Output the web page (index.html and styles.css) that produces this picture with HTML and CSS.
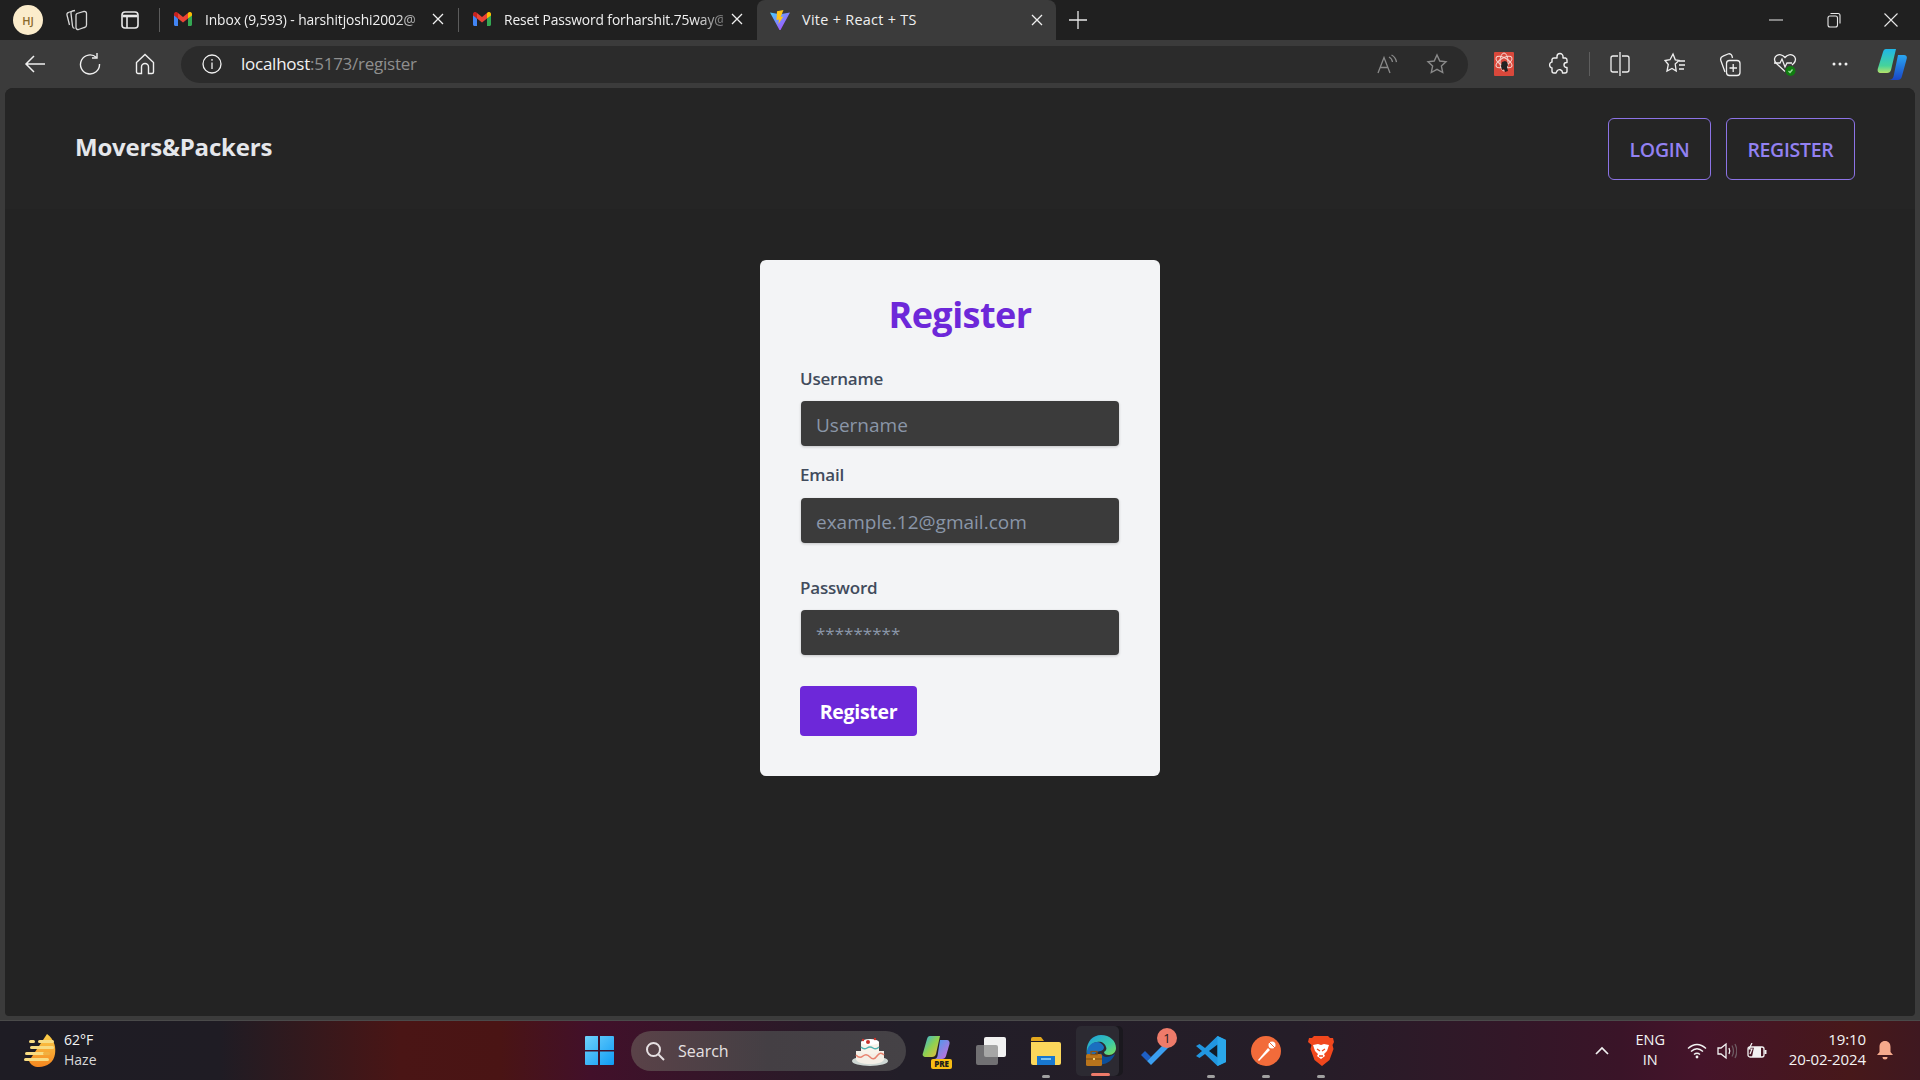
FILE: index.html
```html
<!DOCTYPE html>
<html lang="en">
<head>
<meta charset="utf-8">
<title>Vite + React + TS</title>
<link rel="stylesheet" href="styles.css">
</head>
<body>
<div class="screen">
  <header class="tabbar">
    <div class="avatar">HJ</div>
    <div class="tb-icon tb-work">
      <svg width="24" height="24" viewBox="0 0 24 24" fill="none" stroke="#d8d8d8" stroke-width="1.300"><path d="M6 3.500 3.500 4.500A2 2 0 0 0 2 7l2.500 10"/><path d="M10 2.500 7.500 3A2 2 0 0 0 6 5.500L7.500 18a3 3 0 0 0 2 2.500"/><path d="M12 5.500l7-2a2 2 0 0 1 2.500 2V17a2.500 2.500 0 0 1-2 2.500l-6 2a2 2 0 0 1-2.500-2V8a2.500 2.500 0 0 1 1-2.500z"/></svg>
    </div>
    <div class="tb-icon tb-vert">
      <svg width="20" height="20" viewBox="0 0 20 20" fill="none" stroke="#e8e8e8" stroke-width="1.600"><rect x="2" y="2" width="16" height="16" rx="3"/><path d="M2.500 6h15" stroke-width="2.600"/><path d="M7 6v12"/></svg>
    </div>
    <span class="tab-sep"></span>
    <div class="tab">
      <svg class="fav" width="18" height="14" viewBox="0 0 18 14"><path d="M0 2v10.500c0 .8.600 1.500 1.500 1.500H4V6.500z" fill="#4285f4"/><path d="M14 14h2.500c.9 0 1.500-.7 1.500-1.500V2l-4 4.500z" fill="#34a853"/><path d="M14 1v5.500L18 3.500V2c0-1.800-2.200-2.700-3.500-1.500z" fill="#fbbc04"/><path d="M4 6.500V1l5 4 5-4v5.500L9 10.500z" fill="#ea4335"/><path d="M0 2v1.500l4 3V1L3.500.5C2.200-.7 0 .2 0 2z" fill="#c5221f"/></svg>
      <span class="tab-title">Inbox (9,593) - harshitjoshi2002@</span>
      <svg class="tab-x" width="12" height="12" viewBox="0 0 12 12" stroke="#f0f0f0" stroke-width="1.300"><path d="M1 1l10 10M11 1 1 11"/></svg>
    </div>
    <span class="tab-sep"></span>
    <div class="tab">
      <svg class="fav" width="18" height="14" viewBox="0 0 18 14"><path d="M0 2v10.500c0 .8.600 1.500 1.500 1.500H4V6.500z" fill="#4285f4"/><path d="M14 14h2.500c.9 0 1.500-.7 1.500-1.500V2l-4 4.500z" fill="#34a853"/><path d="M14 1v5.500L18 3.500V2c0-1.800-2.200-2.700-3.500-1.500z" fill="#fbbc04"/><path d="M4 6.500V1l5 4 5-4v5.500L9 10.500z" fill="#ea4335"/><path d="M0 2v1.500l4 3V1L3.500.5C2.200-.7 0 .2 0 2z" fill="#c5221f"/></svg>
      <span class="tab-title">Reset Password forharshit.75way@</span>
      <svg class="tab-x" width="12" height="12" viewBox="0 0 12 12" stroke="#f0f0f0" stroke-width="1.300"><path d="M1 1l10 10M11 1 1 11"/></svg>
    </div>
    <div class="tab tab-active">
      <svg class="fav" width="20" height="20" viewBox="0 0 20 20"><defs><linearGradient id="vt" x1="0" y1="0" x2="1" y2="1"><stop offset="0" stop-color="#41d1ff"/><stop offset="1" stop-color="#bd34fe"/></linearGradient></defs><path d="M0 2.500 10 4.200 20 2.500 10.500 20h-1z" fill="url(#vt)"/><path d="M13.500 0 7 1.300 6.500 10l2.500-.5-.6 4.500 5-7.500-2.700.5z" fill="#ffc517"/></svg>
      <span class="tab-title tab-title-full">Vite + React + TS</span>
      <svg class="tab-x" width="12" height="12" viewBox="0 0 12 12" stroke="#f0f0f0" stroke-width="1.300"><path d="M1 1l10 10M11 1 1 11"/></svg>
    </div>
    <div class="tb-icon tb-plus">
      <svg width="18" height="18" viewBox="0 0 18 18" stroke="#e8e8e8" stroke-width="1.300"><path d="M9 0v18M0 9h18"/></svg>
    </div>
    <div class="win-controls">
      <span class="win-btn"><svg width="14" height="2" viewBox="0 0 14 2" stroke="#e8e8e8"><path d="M0 1h14"/></svg></span>
      <span class="win-btn"><svg width="14" height="16" viewBox="0 0 14 16" fill="none" stroke="#e8e8e8" stroke-width="1.100"><rect x="1" y="4" width="9.500" height="11" rx="2"/><path d="M3.500 1.500h7.500a2 2 0 0 1 2 2v8"/></svg></span>
      <span class="win-btn"><svg width="14" height="14" viewBox="0 0 14 14" stroke="#e8e8e8" stroke-width="1.100"><path d="M.5.500l13 13M13.500.500l-13 13"/></svg></span>
    </div>
  </header>

  <div class="toolbar">
    <span class="tool"><svg width="22" height="20" viewBox="0 0 22 20" fill="none" stroke="#f0f0f0" stroke-width="1.500"><path d="M21 10H2M10 2l-8 8 8 8"/></svg></span>
    <span class="tool"><svg width="22" height="22" viewBox="0 0 22 22" fill="none" stroke="#f0f0f0" stroke-width="1.400"><path d="M17.500 4.500A9.500 9.500 0 1 0 20.500 11"/><path d="M18 0v5h-5"/></svg></span>
    <span class="tool"><svg width="20" height="22" viewBox="0 0 20 22" fill="none" stroke="#f0f0f0" stroke-width="1.400"><path d="M1.500 9.500 10 1.500l8.500 8V19a1.500 1.500 0 0 1-1.500 1.500h-3.500V14a3.500 3.500 0 0 0-7 0v6.500H3A1.500 1.500 0 0 1 1.500 19z"/></svg></span>
    <div class="address">
      <svg class="addr-info" width="20" height="20" viewBox="0 0 20 20" fill="none" stroke="#f0f0f0" stroke-width="1.300"><circle cx="10" cy="10" r="9"/><path d="M10 8.500V15M10 5v1.800"/></svg>
      <span class="url"><span class="url-host">localhost</span>:5173/register</span>
      <svg class="addr-read" width="20" height="20" viewBox="0 0 20 20" fill="none" stroke="#8a8a8a" stroke-width="1.300"><path d="M1 19 7 3.500 13 19M3.500 13.500h7"/><path d="M12 3q3 1.500 3.500 5M14.500 1q4 2 5 7"/></svg>
      <svg class="addr-star" width="22" height="22" viewBox="0 0 22 22" fill="none" stroke="#8a8a8a" stroke-width="1.400"><path d="M11 2l2.800 6 6.200.8-4.600 4.300 1.300 6.400L11 16.300l-5.700 3.200 1.300-6.400L2 8.800 8.200 8z"/></svg>
    </div>
    <div class="tool-group">
      <span class="tool"><svg width="20" height="24" viewBox="0 0 20 24"><rect width="20" height="24" rx="1" fill="#d9483b"/><g fill="none" stroke="#f6d7d2" stroke-width="1"><ellipse cx="10" cy="10" rx="9" ry="4" transform="rotate(30 10 10)"/><ellipse cx="10" cy="10" rx="9" ry="4" transform="rotate(-30 10 10)"/><ellipse cx="10" cy="10" rx="4" ry="9"/></g><path d="M8 10l3-1 2 1 1 3-1 2 1 4-3 1-1-3-2 1-1-4z" fill="#222"/></svg></span>
      <span class="tool"><svg width="20" height="24" viewBox="0 0 20 24" fill="none" stroke="#f0f0f0" stroke-width="1.400" stroke-linejoin="round"><path d="M8 5V4.500a3 3 0 0 1 6 0V6h2.500A2 2 0 0 1 18 8v2.500h-.5a2.500 2.500 0 0 0 0 5h.5V19a2 2 0 0 1-2 2h-2.500v-.5a3 3 0 0 0-5.500-1.500L7 21H5a2 2 0 0 1-2-2v-3l-.5-.2a3 3 0 0 1 0-5.600L3 10V7.500A2 2 0 0 1 5 6h3z"/></svg></span>
      <span class="tool-sep"></span>
      <span class="tool"><svg width="20" height="24" viewBox="0 0 20 24" fill="none" stroke="#f0f0f0" stroke-width="1.300"><path d="M10 0v24"/><path d="M8 4H3a2 2 0 0 0-2 2v12a2 2 0 0 0 2 2h5M12 4h5a2 2 0 0 1 2 2v12a2 2 0 0 1-2 2h-5"/></svg></span>
      <span class="tool"><svg width="22" height="24" viewBox="0 0 22 24" fill="none" stroke="#f0f0f0" stroke-width="1.300"><path d="M9 2l2.300 5.800 3.700.6-3.800 3.600 1 7-4.200-2.600L3 19l1.300-6.500L1 8.500l5-.8z"/><path d="M15 9h6M15 13h6M15 17h5"/></svg></span>
      <span class="tool"><svg width="22" height="26" viewBox="0 0 22 26" fill="none" stroke="#f0f0f0" stroke-width="1.300"><path d="M6 21 2 10c-1-2.500 0-4 2-4.800L9 3c2-.7 3.500.3 4 2l.5 2"/><rect x="7.500" y="9.500" width="13.500" height="15" rx="3"/><path d="M14.200 13v8M10.500 17h7.500"/></svg></span>
      <span class="tool"><svg width="24" height="26" viewBox="0 0 24 26" fill="none" stroke="#f0f0f0" stroke-width="1.300"><path d="M12 20.500 3 12c-5-6 4-12 9-5.500C17 0 26 6 21 12l-2 2"/><path d="M1 12h6l2-4 3 8 2-4h5"/><circle cx="17.500" cy="20" r="5" fill="#107c10" stroke="none"/><path d="M15.500 20l1.500 1.500 2.500-3" stroke="#9be09b"/></svg></span>
      <span class="tool"><svg width="16" height="4" viewBox="0 0 16 4" fill="#f0f0f0"><circle cx="2" cy="2" r="1.500"/><circle cx="8" cy="2" r="1.500"/><circle cx="14" cy="2" r="1.500"/></svg></span>
      <span class="tool tool-copilot"><svg width="30" height="32" viewBox="0 0 30 32"><defs><linearGradient id="cpa" x1="0" y1="0" x2="0" y2="1"><stop offset="0" stop-color="#1fb6e8"/><stop offset=".7" stop-color="#46d39a"/><stop offset="1" stop-color="#b6e36a"/></linearGradient><linearGradient id="cpb" x1="0" y1="0" x2="0" y2="1"><stop offset="0" stop-color="#2aa6f0"/><stop offset="1" stop-color="#1a46c8"/></linearGradient></defs><path d="M9 1h10l-5 21c-.5 2-2 3-4 3H4c-3 0-4-2-3-5L6 4c.5-2 1.500-3 3-3z" fill="url(#cpa)"/><path d="M21 7h6c2.500 0 3.500 2 2.500 4.500L25 28c-.5 2.500-2 4-4.500 4H11c3 0 5-1 5.500-3.500z" fill="url(#cpb)"/></svg></span>
    </div>
  </div>

  <div class="viewport">
    <nav class="nav">
      <a class="brand">Movers&amp;Packers</a>
      <div class="nav-actions">
        <a class="nav-btn">LOGIN</a>
        <a class="nav-btn">REGISTER</a>
      </div>
    </nav>
    <main class="main">
      <form class="card">
        <h1 class="card-title">Register</h1>
        <label class="label label-user">Username</label>
        <input class="input" type="text" placeholder="Username">
        <label class="label label-email">Email</label>
        <input class="input" type="text" placeholder="example.12@gmail.com">
        <label class="label label-pass">Password</label>
        <input class="input input-pass" type="text" placeholder="*********">
        <button class="submit" type="button">Register</button>
      </form>
    </main>
  </div>

  <footer class="taskbar">
    <div class="weather">
      <svg width="32" height="34" viewBox="0 0 32 34"><defs><linearGradient id="sun" x1="0" y1="0" x2="0" y2="1"><stop offset="0" stop-color="#fbcf4a"/><stop offset="1" stop-color="#f5861f"/></linearGradient></defs><path d="M23 0c8 6 9 14 8 20-1 8-8 13-16 13-5 0-8-2-10-6z" fill="url(#sun)"/><g fill="#f8dc82"><rect x="5" y="6" width="6" height="3" rx="1.500"/><rect x="14" y="6" width="16" height="3" rx="1.500"/><rect x="6" y="12" width="24" height="3" rx="1.500"/><rect x="1" y="18" width="20" height="3" rx="1.500"/><rect x="19" y="18" width="7" height="3" rx="1.500" fill="#f0b040"/><rect x="0" y="24" width="25" height="3" rx="1.500"/></g></svg>
      <div class="weather-text"><span class="w-temp">62°F</span><span class="w-desc">Haze</span></div>
    </div>
    <div class="task-center">
      <span class="task task-start"><svg width="29" height="29" viewBox="0 0 29 29"><defs><linearGradient id="win" x1="0" y1="0" x2="1" y2="1"><stop offset="0" stop-color="#6fd1fb"/><stop offset="1" stop-color="#0f9cf5"/></linearGradient></defs><path d="M1 0h12v14H0V1a1 1 0 0 1 1-1zM15 0h13a1 1 0 0 1 1 1v13H15zM0 15.500h13V29H1a1 1 0 0 1-1-1zM15 15.500h14V28a1 1 0 0 1-1 1H15z" fill="url(#win)"/></svg></span>
      <div class="search">
        <svg width="20" height="20" viewBox="0 0 20 20" fill="none" stroke="#e6e0e2" stroke-width="2"><circle cx="8.500" cy="8.500" r="6.500"/><path d="M13.500 13.500 19 19"/></svg>
        <span class="search-text">Search</span>
        <svg class="cake" width="36" height="30" viewBox="0 0 36 30"><ellipse cx="18" cy="25" rx="18" ry="5" fill="#cfd8d4"/><path d="M4 15h28v8c0 3-6 5-14 5S4 26 4 23z" fill="#f4efe6"/><path d="M4 19q3.500 4 7 1t7 1 7-1 7-1" fill="none" stroke="#e8836f" stroke-width="1.500"/><path d="M9 6h18v9c0 2-4 3-9 3s-9-1-9-3z" fill="#f8f3ea"/><path d="M9 11q3 3 6 1t6 0 6-1" fill="none" stroke="#52b2b0" stroke-width="1.500"/><ellipse cx="18" cy="6" rx="9" ry="3" fill="#fff"/><circle cx="16" cy="6" r="2" fill="#c8342c"/><circle cx="23" cy="3" r="1.200" fill="#c8342c"/><circle cx="11" cy="4" r="1.200" fill="#c8342c"/></svg>
      </div>
      <span class="task task-copilot">
        <svg width="28" height="24" viewBox="0 0 28 24"><defs><linearGradient id="cp2" x1="0" y1="0" x2="1" y2="1"><stop offset="0" stop-color="#2fb0e8"/><stop offset=".5" stop-color="#8fd14f"/><stop offset="1" stop-color="#f6b73c"/></linearGradient><linearGradient id="cp3" x1="0" y1="0" x2="1" y2="1"><stop offset="0" stop-color="#3aa0f0"/><stop offset="1" stop-color="#d36ad8"/></linearGradient></defs><path d="M8 0h10l-4 18c-.5 2-2 3-4 3H4c-3 0-4-2-3-4L5 3c.5-2 1.500-3 3-3z" fill="url(#cp2)"/><path d="M18 4h7c2 0 3 2 2.500 4L24 20c-.5 2-2 3-4 3h-8c2 0 3-1 3.500-3z" fill="url(#cp3)"/></svg>
        <span class="pre-badge">PRE</span>
      </span>
      <span class="task task-view"><svg width="30" height="28" viewBox="0 0 30 28"><rect x="8" y="0" width="22" height="20" rx="2" fill="#f2f2f2"/><rect x="0" y="8" width="22" height="20" rx="2" fill="#8c8c8c" fill-opacity=".75"/></svg></span>
      <span class="task task-files has-dot"><svg width="30" height="28" viewBox="0 0 30 28"><path d="M0 2a2 2 0 0 1 2-2h8l3 4H0z" fill="#e3a81e"/><path d="M0 5h28a2 2 0 0 1 2 2v19a2 2 0 0 1-2 2H2a2 2 0 0 1-2-2z" fill="#fbd75b"/><rect x="6" y="19" width="18" height="9" fill="#1878d0"/><rect x="10" y="21" width="10" height="2" fill="#7fc4f2"/></svg></span>
      <span class="task task-edge">
        <svg width="30" height="32" viewBox="0 0 30 32"><defs><linearGradient id="eg" x1="0" y1="0" x2="1" y2="1"><stop offset="0" stop-color="#1b9de2"/><stop offset=".6" stop-color="#3bc9a7"/><stop offset="1" stop-color="#7fe05a"/></linearGradient></defs><path d="M15 0c9 0 15 6 15 13 0 4-3 7-7 7-3 0-5-1-5-3 2-1 3-3 2-5-1-4-5-6-9-5-6 1-10 7-10 13C-1 8 6 0 15 0z" fill="url(#eg)"/><path d="M1 18c0-7 5-11 10-11 3 0 6 2 7 5 0 2-1 3-3 4-5 0-8 4-7 10-4-1-7-4-7-8z" fill="#1b6fc0"/><path d="M15 18c2 5 7 5 14 1-3 7-9 11-15 10-3-3-2-9 1-11z" fill="#0c4f9a"/><rect x="0" y="19" width="16" height="12" rx="1.500" fill="#b8741c"/><rect x="5" y="16.500" width="6" height="3" fill="none" stroke="#8a5414" stroke-width="1.300"/><rect x="0" y="23.500" width="16" height="1" fill="#7a4a10"/><rect x="7" y="23" width="2" height="2" fill="#f3cf72"/></svg>
      </span>
      <span class="task task-todo">
        <svg width="28" height="22" viewBox="0 0 28 22"><path d="M0 12l4-4 6 6-4 4z" fill="#1e5fc4"/><path d="M6 18l4 4L28 4l-4-4z" fill="#3b9ff0"/></svg>
        <span class="badge">1</span>
      </span>
      <span class="task task-code has-dot"><svg width="30" height="30" viewBox="0 0 30 30"><path d="M21.500 0 30 4v22l-8.500 4L9 18l-5.500 4L0 20l6-5-6-5 3.500-2L9 12z" fill="#2196e0"/><path d="M21.500 8.500v13L13 15z" fill="#111c28"/><path d="M21.500 0 30 4v22l-8.500 4z" fill="#2aa7ea"/></svg></span>
      <span class="task task-postman has-dot"><svg width="30" height="30" viewBox="0 0 30 30"><circle cx="15" cy="15" r="15" fill="#f26b3a"/><path d="M7 24 17 12l2 2L8 25z" fill="#fff"/><circle cx="21" cy="9" r="3.500" fill="#fff"/><path d="M18 6l6 6" stroke="#f26b3a"/></svg></span>
      <span class="task task-brave has-dot"><svg width="26" height="30" viewBox="0 0 26 30"><path d="M6 0h14l2 2 3 0 1 4-1.500 3 1 4-4 11-7.500 6-7.500-6-4-11 1-4L0 6l1-4 3 0z" fill="#f1471d"/><path d="M5 9l5-1 3 1 3-1 5 1-2 6-3 3 1 2-4 3-4-3 1-2-3-3z" fill="#fff"/><path d="M9 13l3 2M17 13l-3 2M11 20h4" stroke="#f1471d" stroke-width="1.300"/></svg></span>
    </div>
    <div class="tray">
      <svg class="tray-chev" width="14" height="9" viewBox="0 0 14 9" fill="none" stroke="#f2f2f2" stroke-width="1.700"><path d="M1 8l6-6 6 6"/></svg>
      <div class="lang"><span>ENG</span><span>IN</span></div>
      <svg class="tray-wifi" width="20" height="16" viewBox="0 0 20 16" fill="none" stroke="#f2f2f2" stroke-width="1.400"><path d="M1 5.500q9-8 18 0M4 8.500q6-5.500 12 0M7 11.500q3-2.500 6 0"/><circle cx="10" cy="14" r="1.400" fill="#f2f2f2" stroke="none"/></svg>
      <svg class="tray-vol" width="20" height="18" viewBox="0 0 20 18" fill="none" stroke="#f2f2f2" stroke-width="1.300"><path d="M1 6h3l5-4v14l-5-4H1z"/><path d="M12 6q1.500 3 0 6"/><path d="M15 3.500q3 5.500 0 11M18 2q3.500 7 0 14" stroke="#6d5a62"/></svg>
      <svg class="tray-bat" width="20" height="16" viewBox="0 0 20 16" fill="none" stroke="#f2f2f2" stroke-width="1.300"><rect x="1" y="4" width="16" height="10" rx="2"/><path d="M18.500 7v4" stroke-width="2"/><path d="M7 4h7v10H5z" fill="#f2f2f2" stroke="none"/><path d="M5 0 2 6h3l-2 5" stroke-width="1.200"/></svg>
      <div class="clock"><span>19:10</span><span>20-02-2024</span></div>
      <svg class="tray-bell" width="16" height="20" viewBox="0 0 16 20" fill="#f6a98c"><path d="M8 0c3.500 0 5.500 2.500 5.500 6v5l2.500 3H0l2.500-3V6C2.500 2.500 4.500 0 8 0z"/><path d="M5.500 16h5a2.500 2.500 0 0 1-5 0z"/></svg>
    </div>
  </footer>
</div>
</body>
</html>
```

FILE: styles.css
```css
* { box-sizing: border-box; }
html, body { margin: 0; padding: 0; height: 100%; overflow: hidden; }
body { font-family: "Open Sans", "Noto Sans", sans-serif; background: #3b3b3b; }
svg { display: block; flex: none; }

.screen { width: 1920px; height: 1080px; display: flex; flex-direction: column; background: #3b3b3b; }

/* tab strip */
.tabbar { height: 40px; flex: none; background: #202020; display: flex; align-items: flex-start; color: #f0f0f0; font-size: 14px; }
.avatar { width: 30px; height: 30px; margin: 5px 0 0 13px; border-radius: 50%; background: #fbeccb; color: #8a6a2a; font-size: 11px; font-weight: 600; display: flex; align-items: center; justify-content: center; }
.tb-icon { height: 40px; display: flex; align-items: center; justify-content: center; }
.tb-work { width: 24px; margin-left: 22px; }
.tb-vert { width: 20px; margin-left: 31px; }
.tab-sep { width: 1px; height: 24px; margin-top: 8px; background: #5c5c5c; flex: none; }
.tb-vert + .tab-sep { margin-left: 19px; }
.tab { width: 298px; height: 40px; padding: 0 14px 2px 14px; display: flex; align-items: center; flex: none; }
.tab .fav { margin-right: 13px; }
.tab-title { flex: 1; min-width: 0; white-space: nowrap; font-size: 13.8px; letter-spacing: -.1px; -webkit-mask-image: linear-gradient(90deg, #000 190px, rgba(0,0,0,.25) 226px); mask-image: linear-gradient(90deg, #000 190px, rgba(0,0,0,.25) 226px); }
.tab-title-full { font-size: 14.4px; letter-spacing: .3px; -webkit-mask-image: none; mask-image: none; }
.tab-x { margin-left: 8px; }
.tab-active { width: 299px; height: 48px; background: #3b3b3b; border-radius: 8px 8px 0 0; padding: 0 13px 9px 13px; }
.tab-active .fav { margin-right: 12px; }
.tb-plus { width: 18px; margin-left: 13px; }
.win-controls { margin-left: auto; display: flex; padding-right: 0; }
.win-btn { width: 57.500px; height: 40px; display: flex; align-items: center; justify-content: center; }

/* address toolbar */
.toolbar { height: 48px; flex: none; background: #3b3b3b; display: flex; align-items: center; padding: 0 3px 0 7px; }
.tool { width: 55px; height: 48px; display: flex; align-items: center; justify-content: center; flex: none; }
.address { flex: 1; height: 37px; margin: 0 8px 0 9px; padding: 0 20px 0 21px; border-radius: 19px; background: #2b2b2b; display: flex; align-items: center; }
.addr-info { margin-right: 19px; }
.url { flex: 1; color: #8f8f8f; font-size: 17px; letter-spacing: -.25px; padding-bottom: 2px; }
.url-host { color: #f2f2f2; }
.addr-read { margin-right: 29px; }
.tool-group { display: flex; align-items: center; }
.tool-sep { width: 6px; height: 24px; flex: none; background: linear-gradient(#5e5e5e, #5e5e5e) center / 1px 100% no-repeat; }
.tool-copilot { width: 50px; }

/* page */
.viewport { flex: 1; min-height: 0; margin: 0 5px 4px; background: #232323; border-radius: 8px 8px 4px 4px; overflow: hidden; display: flex; flex-direction: column; }
.nav { height: 121px; flex: none; background: #252525; display: flex; justify-content: space-between; align-items: flex-start; padding: 30px 60px 0 70px; }
.brand { color: #e5e7eb; font-size: 24px; font-weight: 700; line-height: 58px; letter-spacing: -.2px; }
.nav-actions { display: flex; gap: 15px; }
.nav-btn { height: 62px; padding: 0 20.500px; display: flex; align-items: center; color: #9381f2; font-size: 19.500px; font-weight: 600; border: 1px solid #8c73e6; border-radius: 6px; letter-spacing: -.3px; }

.main { flex: 1; display: flex; justify-content: center; align-items: flex-start; padding-top: 51px; }
.card { width: 400px; height: 516px; padding: 35px 40px 40px; background: #f3f4f6; border-radius: 6px; display: flex; flex-direction: column; align-items: flex-start; }
.card-title { align-self: stretch; margin: 0; text-align: center; color: #6d28d9; font-size: 36px; font-weight: 700; line-height: 40px; letter-spacing: -.55px; }
.label { color: #414b5c; font-size: 17px; font-weight: 600; line-height: 24px; letter-spacing: -.2px; }
.label-user { margin-top: 32px; margin-bottom: 10px; }
.label-email { margin-top: 17px; margin-bottom: 11px; }
.label-pass { margin-top: 33px; margin-bottom: 10px; }
.input { width: 318px; height: 45px; margin-left: 1px; padding: 2px 15px 0; border: 0; border-radius: 4px; background: #3b3b3b; color: #fff; font: 400 19px "Open Sans", "Noto Sans", sans-serif; box-shadow: 0 1px 3px rgba(0,0,0,.2); outline: none; }
.input::placeholder { color: #8a96a8; opacity: 1; }
.input-pass { font-size: 17px; padding-top: 2px; padding-bottom: 0; }
.submit { margin-top: 31px; width: 117px; height: 50px; padding-top: 2px; border: 0; border-radius: 4px; background: #6d28d9; color: #fff; font: 700 19.500px "Open Sans", "Noto Sans", sans-serif; letter-spacing: -.3px; }

/* taskbar */
.taskbar { height: 60px; flex: none; display: grid; grid-template-columns: 585px 1fr auto; align-items: center; color: #f4f4f4; background: linear-gradient(90deg, #1e1c24 0, #1f1c24 220px, #4a1515 400px, #4a1414 500px, #42102a 590px, #2a1a28 800px, #221e28 900px, #251d28 1300px, #3a1428 1620px, #45142a 1700px, #47181a 1850px, #3f1820 1920px); border-top: 1px solid #4a4a4a; }
.weather { display: flex; align-items: center; padding-left: 24px; }
.weather-text { display: flex; flex-direction: column; margin-left: 8px; padding-bottom: 2px; font-size: 14px; line-height: 20px; }
.w-desc { color: #d8d8d8; }
.task-center { display: flex; align-items: center; height: 100%; }
.task { position: relative; display: flex; align-items: center; justify-content: center; height: 100%; flex: none; }
.task-start { width: 29px; }
.search { width: 275px; height: 40px; margin-left: 17px; padding: 0 18px 0 14px; border-radius: 20px; background: #4a4347; background-image: linear-gradient(90deg, #5a4248, #443f44 50%, #454246); display: flex; align-items: center; flex: none; }
.search-text { flex: 1; margin-left: 13px; font-size: 16px; color: #e6e0e2; }
.task-copilot { width: 28px; margin-left: 16px; padding-bottom: 6px; }
.pre-badge { position: absolute; right: -2px; top: 38px; padding: 0 3px; border-radius: 2px; background: #f8bd14; color: #1c1c1c; font-size: 8px; line-height: 10px; font-weight: 800; }
.task-view { width: 30px; margin-left: 26px; }
.task-files { width: 30px; margin-left: 25px; }
.task-edge { width: 43px; height: 50px; margin-left: 15px; padding-left: 7px; border-radius: 5px; background: #2c2a32; box-shadow: 4px 0 0 #1a181e; }
.task-edge::after { content: ""; position: absolute; left: 15px; bottom: 0; width: 19px; height: 3px; border-radius: 2px; background: #ee7b6a; }
.task-todo { width: 36px; margin-left: 22px; justify-content: flex-start; padding-top: 6px; }
.badge { position: absolute; left: 16px; top: 7px; width: 20px; height: 20px; border-radius: 50%; background: #ee7b6a; color: #241a1a; font-size: 13px; line-height: 20px; text-align: center; }
.task-code { width: 30px; margin-left: 19px; }
.task-postman { width: 30px; margin-left: 25px; }
.task-brave { width: 26px; margin-left: 27px; }
.has-dot::after { content: ""; position: absolute; left: 50%; bottom: 2px; width: 8px; height: 3px; margin-left: -4px; border-radius: 2px; background: #a0a0a0; }

.tray { display: flex; align-items: center; padding-right: 27px; }
.tray-chev { margin-right: 21px; }
.lang { width: 40px; display: flex; flex-direction: column; align-items: center; padding-bottom: 1px; font-size: 14.500px; line-height: 20px; margin-right: 17px; }
.tray-wifi { margin-right: 10px; }
.tray-vol { margin-right: 10px; }
.clock { display: flex; flex-direction: column; align-items: flex-end; margin: 0 11px 0 21.500px; padding-bottom: 3px; font-size: 15px; line-height: 20px; letter-spacing: -.1px; }
```
